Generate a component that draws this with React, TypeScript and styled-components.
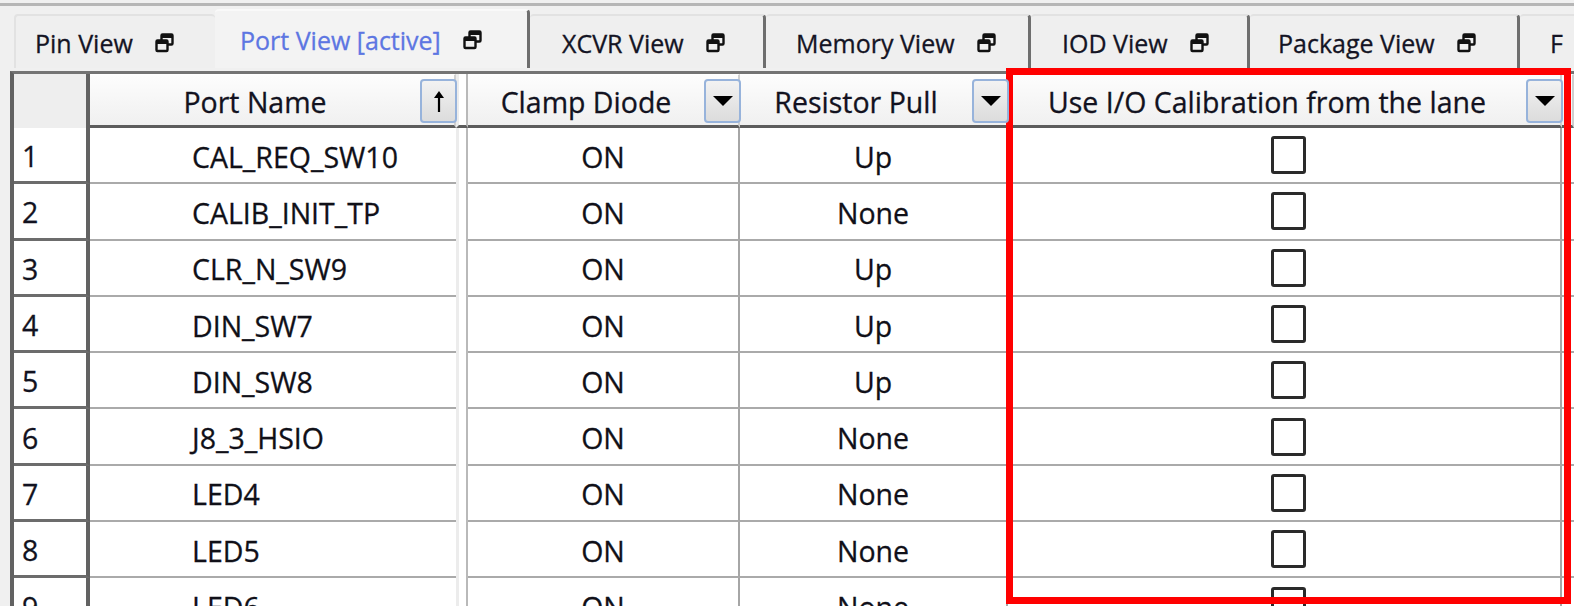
import React from 'react';
import styled, { createGlobalStyle } from 'styled-components';

type PortRow = {
  name: string,
  clamp: string,
  pull: string,
};

type TabType = {
  label: string,
  width: number,
  pad: number,
  active?: boolean,
  icon?: boolean,
};

const tabs: TabType[] = [
  { label: 'Pin View', width: 201, pad: 19, icon: true },
  { label: 'Port View [active]', width: 315, pad: 25, active: true, icon: true },
  { label: 'XCVR View', width: 236, pad: 32, icon: true },
  { label: 'Memory View', width: 265, pad: 30, icon: true },
  { label: 'IOD View', width: 219, pad: 31, icon: true },
  { label: 'Package View', width: 270, pad: 28, icon: true },
  { label: 'F', width: 80, pad: 30 },
];

const rows: PortRow[] = [
  { name: 'CAL_REQ_SW10', clamp: 'ON', pull: 'Up' },
  { name: 'CALIB_INIT_TP', clamp: 'ON', pull: 'None' },
  { name: 'CLR_N_SW9', clamp: 'ON', pull: 'Up' },
  { name: 'DIN_SW7', clamp: 'ON', pull: 'Up' },
  { name: 'DIN_SW8', clamp: 'ON', pull: 'Up' },
  { name: 'J8_3_HSIO', clamp: 'ON', pull: 'None' },
  { name: 'LED4', clamp: 'ON', pull: 'None' },
  { name: 'LED5', clamp: 'ON', pull: 'None' },
  { name: 'LED6', clamp: 'ON', pull: 'None' },
];

const GlobalStyle = createGlobalStyle`
  html, body {
    margin: 0;
    padding: 0;
    background: #f0f0f0;
    overflow: hidden;
  }
  body {
    font-family: 'Open Sans', 'Noto Sans', sans-serif;
    color: #101018;
  }
`;

const RestoreIcon = () => (
  <svg width="19" height="20" viewBox="0 0 19 20">
    <rect x="6.5" y="1.5" width="11" height="10" fill="#f0f0f0" stroke="#111" strokeWidth="2.4" rx="1" />
    <rect x="6" y="1" width="12" height="4" fill="#111" rx="1" />
    <rect x="1.5" y="7.5" width="11" height="10.5" fill="#f0f0f0" stroke="#111" strokeWidth="2.4" rx="1" />
    <rect x="1" y="7" width="12" height="4" fill="#111" rx="1" />
  </svg>
);

const DownTriangle = () => (
  <svg width="22" height="12" viewBox="0 0 22 12">
    <path d="M1 1 L21 1 L11 11 Z" fill="#000" />
  </svg>
);

const UpArrow = () => (
  <svg width="12" height="24" viewBox="0 0 12 24">
    <path d="M6 2 L1 9 L11 9 Z" fill="#000" />
    <rect x="4.9" y="8" width="2.2" height="15" fill="#000" />
  </svg>
);

export default function App() {
  return (
    <Frame>
      <GlobalStyle />
      <TabStrip>
        {tabs.map((t) => (
          <Tab key={t.label} width={t.width} pad={t.pad} active={!!t.active} first={t.label === 'Pin View'}>
            <TabLabel active={!!t.active}>{t.label}</TabLabel>
            {t.icon && <TabIcon><RestoreIcon /></TabIcon>}
          </Tab>
        ))}
      </TabStrip>

      <Table>
        <CornerCell />
        <HeaderCell>
          <HeaderLabel>Port Name</HeaderLabel>
          <HeaderButton><UpArrow /></HeaderButton>
        </HeaderCell>
        <SplitCell header />
        <HeaderCell>
          <HeaderLabel>Clamp Diode</HeaderLabel>
          <HeaderButton><DownTriangle /></HeaderButton>
        </HeaderCell>
        <HeaderCell>
          <HeaderLabel>Resistor Pull</HeaderLabel>
          <HeaderButton><DownTriangle /></HeaderButton>
        </HeaderCell>
        <HeaderCell>
          <HeaderLabel>Use I/O Calibration from the lane</HeaderLabel>
          <HeaderButton><DownTriangle /></HeaderButton>
        </HeaderCell>
        <HeaderCell />

        {rows.map((r, i) => (
          <React.Fragment key={r.name}>
            <RowNumber>{i + 1}</RowNumber>
            <NameCell>{r.name}</NameCell>
            <SplitCell />
            <ValueCell divider>{r.clamp}</ValueCell>
            <ValueCell divider>{r.pull}</ValueCell>
            <ValueCell divider><CheckBox /></ValueCell>
            <ValueCell />
          </React.Fragment>
        ))}
      </Table>

      <Highlight />
    </Frame>
  );
}

const Frame = styled.div`
  position: relative;
  width: 1574px;
  height: 606px;
  overflow: hidden;
  background: #f0f0f0;
`;

const TabStrip = styled.div`
  margin-top: 3px;
  border-top: 3px solid #b6b6b6;
  height: 65px;
  box-sizing: border-box;
  padding-left: 14px;
  display: flex;
  align-items: flex-end;
  background: #f0f0f0;
`;

const Tab = styled.div<{ width: number, pad: number, active: boolean, first: boolean }>`
  flex: none;
  box-sizing: border-box;
  width: ${(props) => props.width}px;
  height: ${(props) => (props.active ? 59 : 54)}px;
  padding-left: ${(props) => props.pad}px;
  padding-top: ${(props) => (props.active ? 0 : 1)}px;
  display: flex;
  align-items: center;
  gap: 22px;
  background: ${(props) => (props.active ? '#f3f3f3' : '#efefef')};
  border-top: 2px solid ${(props) => (props.active ? '#f9f9f9' : '#e2e2e2')};
  border-left: ${(props) => (props.first ? '2px solid #e2e2e2' : 'none')};
  border-right: ${(props) => (props.first ? 'none' : '3px solid #6e6e6e')};
  border-top-left-radius: 4px;
  border-top-right-radius: 4px;
`;

const TabLabel = styled.span<{ active: boolean }>`
  font-size: 25px;
  white-space: nowrap;
  -webkit-text-stroke: 0.3px ${(props) => (props.active ? '#5d76e2' : '#141424')};
  color: ${(props) => (props.active ? '#5d76e2' : '#141424')};
`;

const TabIcon = styled.span`
  display: flex;
  align-items: center;
`;

const Table = styled.div`
  margin: 3px 0 0 10px;
  background: #ffffff;
  border-top: 3px solid #747474;
  border-left: 4px solid #626262;
  display: grid;
  grid-template-columns: 76px 366px 12px 272px 268px 554px 1fr;
  grid-template-rows: 54px;
  grid-auto-rows: 56.3px;
`;

const CornerCell = styled.div`
  background: #eeeeee;
  border-right: 4px solid #626262;
`;

const HeaderCell = styled.div`
  display: flex;
  align-items: center;
  box-sizing: border-box;
  background: linear-gradient(#fdfdfd, #f0f0f0);
  border-top: 1px solid #ffffff;
  border-bottom: 3px solid #5c5c5c;
  border-right: 2px solid #cfcfcf;
`;

const HeaderLabel = styled.div`
  flex: 1;
  text-align: center;
  padding-top: 4px;
  font-size: 28.5px;
  white-space: nowrap;
  color: #121220;
  -webkit-text-stroke: 0.3px #121220;
`;

const HeaderButton = styled.div`
  flex: none;
  width: 37px;
  height: 44px;
  margin-right: -3px;
  margin-top: 2px;
  box-sizing: border-box;
  border: 2px solid #97b3db;
  border-radius: 4px;
  background: linear-gradient(#f2f2f2, #dcdcdc);
  display: flex;
  align-items: center;
  justify-content: center;
  position: relative;
  z-index: 1;
`;

const SplitCell = styled.div<{ header?: boolean }>`
  background: #ffffff;
  border-left: 3px solid #ececec;
  border-right: 2px solid #b9b9b9;
  border-bottom: ${(props) => (props.header ? '3px solid #5c5c5c' : 'none')};
`;

const RowNumber = styled.div`
  display: flex;
  align-items: center;
  padding: 3px 0 0 8px;
  font-size: 28.5px;
  color: #121220;
  -webkit-text-stroke: 0.3px #121220;
  background: #ffffff;
  border-right: 4px solid #626262;
  border-bottom: 3px solid #6c6c6c;
`;

const NameCell = styled.div`
  display: flex;
  align-items: center;
  padding: 3px 0 0 102px;
  font-size: 28.5px;
  white-space: nowrap;
  color: #101018;
  -webkit-text-stroke: 0.3px #101018;
  border-bottom: 2px solid #aaaaaa;
`;

const ValueCell = styled.div<{ divider?: boolean }>`
  display: flex;
  align-items: center;
  justify-content: center;
  padding-top: 3px;
  font-size: 28.5px;
  white-space: nowrap;
  color: #101018;
  -webkit-text-stroke: 0.3px #101018;
  border-bottom: 2px solid #aaaaaa;
  border-right: ${(props) => (props.divider ? '2px solid #a6a6a6' : 'none')};
`;

const CheckBox = styled.div`
  width: 35px;
  height: 38px;
  margin: -3px 0 0 9px;
  box-sizing: border-box;
  border: 3px solid #2a2a2a;
  border-radius: 3px;
  background: #ffffff;
`;

const Highlight = styled.div`
  position: absolute;
  left: 1006px;
  top: 68px;
  width: 565px;
  height: 536px;
  box-sizing: border-box;
  border: 7px solid #ff0000;
  pointer-events: none;
`;
